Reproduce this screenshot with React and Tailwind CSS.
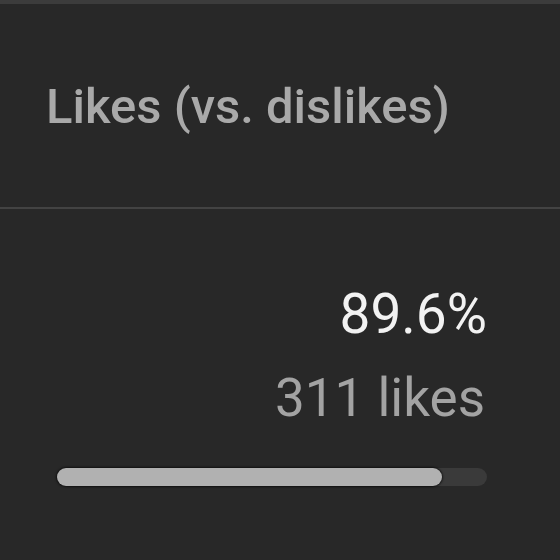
export default function App() {
  const pct = 89.6;
  return (
    <div className="w-[560px] h-[560px] bg-[#282828] flex flex-col" style={{ fontFamily: 'Roboto, "Noto Sans", sans-serif' }}>
      <div className="h-[4px] bg-[#3c3c3c]" />
      {/* Header */}
      <div className="h-[203px] pl-[46px] pt-[78px]">
        <h2 className="text-[49px] leading-none text-[#a9a9a9] font-medium">Likes (vs. dislikes)</h2>
      </div>
      <div className="h-[2px] bg-[#434343]" />
      {/* Body */}
      <div className="flex flex-col items-end pr-[73px] pt-[78px]">
        <div className="text-[55px] leading-none text-[#f2f2f2]">89.6%</div>
        <div className="text-[53px] leading-none text-[#a3a3a3] mt-[30px] mr-[2px]">311 likes</div>
      </div>
      <div className="pl-[57px] mt-[43px]">
        <div className="w-[430px] h-[18px] rounded-full bg-[#3a3a3a]">
          <div
            className="h-full rounded-full bg-[#b1b1b1] shadow-[0_0_2px_1px_rgba(0,0,0,0.6)]"
            style={{ width: `${pct}%` }}
          />
        </div>
      </div>
    </div>
  );
}
